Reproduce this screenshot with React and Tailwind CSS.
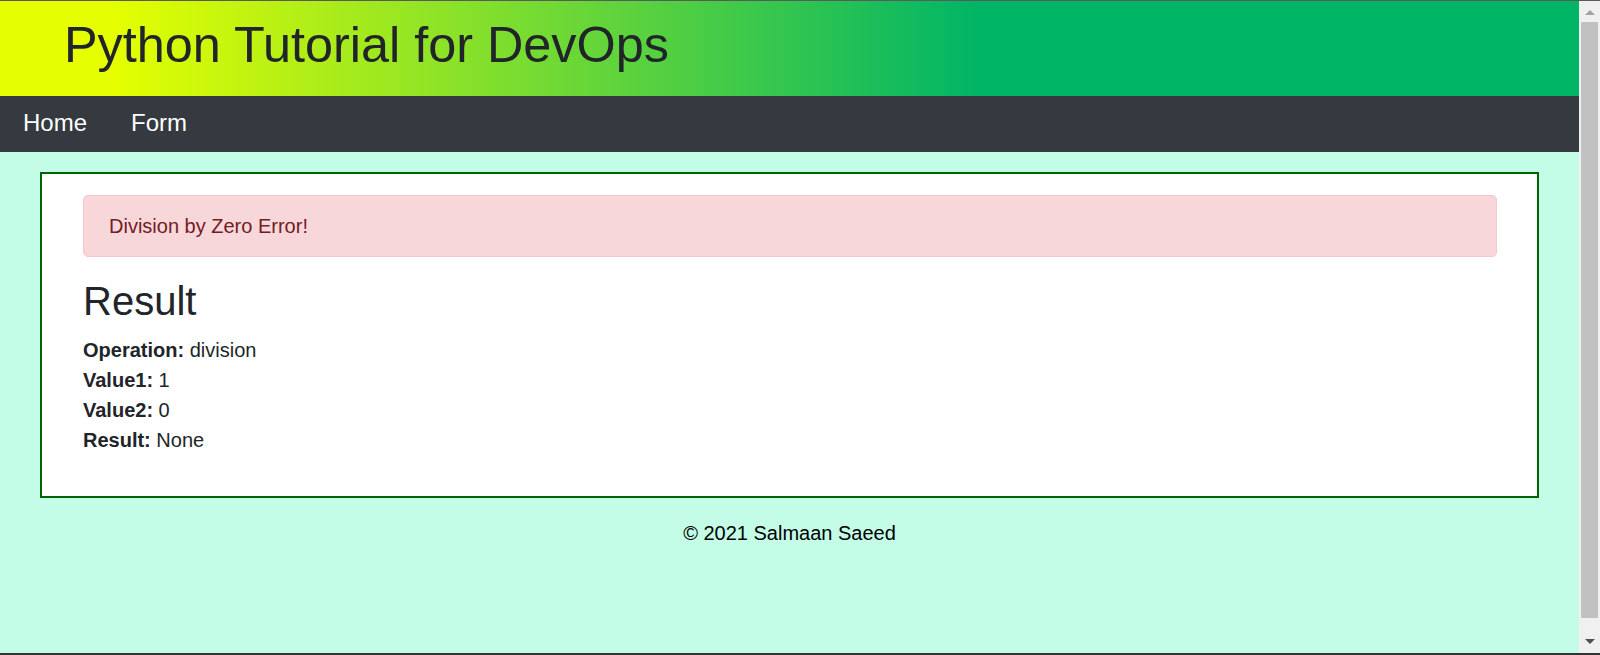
import React from "react";

export default function App() {
  return (
    <div className="w-[1600px] h-[655px] overflow-hidden flex flex-col border-t border-t-[#5a5a5a] border-b-2 border-b-[#333333] font-['Liberation_Sans',Arial,sans-serif] text-[#212529]">
      <div className="flex flex-1 min-h-0">
        <div className="flex-1 bg-[#c3fde7] flex flex-col">
          <header className="h-[95px] bg-[linear-gradient(90deg,#e5ff00_7%,#00b566_62%)] pl-[64px] pt-[14px]">
            <h1 className="text-[50.4px] leading-[60px] font-normal text-[#212529]">
              Python Tutorial for DevOps
            </h1>
          </header>
          <nav className="h-[56px] bg-[#343a40] flex items-start pl-[23px] pt-[10px] gap-[44px] text-white text-[24px] leading-[34px]">
            <a href="#">Home</a>
            <a href="#">Form</a>
          </nav>
          <main className="px-[40px] pt-[20px]">
            <div className="border-2 border-[#006400] bg-white pl-[41px] pr-[40px] pt-[21px] pb-[41px]">
              <div className="border border-[#f5c6cb] rounded-[5px] bg-[#f8d7da] text-[#721c24] px-[25px] py-[15px] text-[20px] leading-[30px] mb-[20px]">
                Division by Zero Error!
              </div>
              <h2 className="text-[40px] leading-[48px] font-normal mb-[10px]">Result</h2>
              <div className="text-[20px] leading-[30px]">
                <div>
                  <b className="font-bold">Operation:</b> division
                </div>
                <div>
                  <b className="font-bold">Value1:</b> 1
                </div>
                <div>
                  <b className="font-bold">Value2:</b> 0
                </div>
                <div>
                  <b className="font-bold">Result:</b> None
                </div>
              </div>
            </div>
            <footer className="mt-[20px] text-center text-[20px] leading-[30px] text-black">
              © 2021 Salmaan Saeed
            </footer>
          </main>
        </div>
        <div className="w-[21px] bg-[#f0f0f0] flex flex-col">
          <div className="h-[21px] flex justify-center pt-[9px]">
            <div className="w-0 h-0 border-l-[5px] border-r-[5px] border-b-[5px] border-l-transparent border-r-transparent border-b-[#a3a3a3]"></div>
          </div>
          <div className="h-[596px] ml-[2px] mr-[2px] bg-[#c1c1c1]"></div>
          <div className="flex-1 flex items-end justify-center pb-[9px]">
            <div className="w-0 h-0 border-l-[5px] border-r-[5px] border-t-[5px] border-l-transparent border-r-transparent border-t-[#505050]"></div>
          </div>
        </div>
      </div>
    </div>
  );
}
